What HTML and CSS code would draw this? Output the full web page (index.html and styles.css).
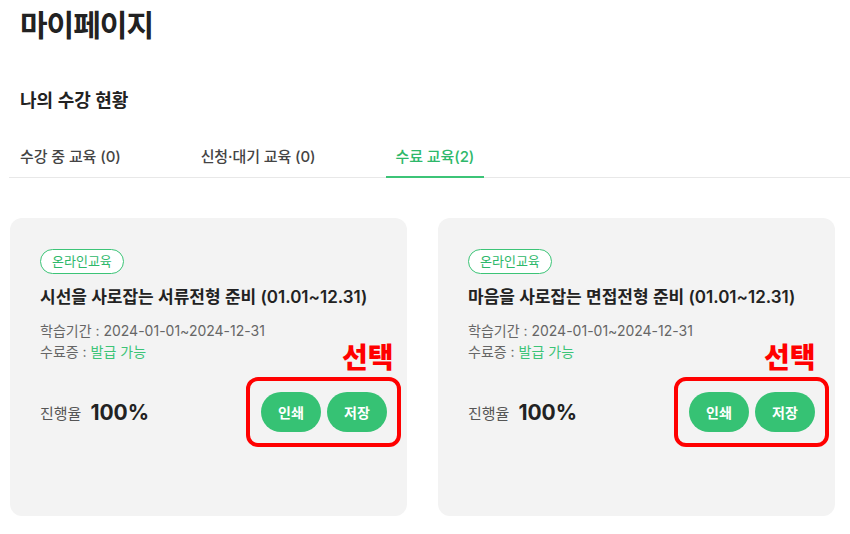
FILE: index.html
```html
<!DOCTYPE html>
<html lang="ko">
<head>
<meta charset="utf-8">
<title>마이페이지</title>
<link rel="stylesheet" href="styles.css">
</head>
<body>
<div class="page">
  <h1 class="page-title">마이페이지</h1>
  <h2 class="section-title">나의 수강 현황</h2>
  <div class="tabs">
    <div class="tab">수강 중 교육 (0)</div>
    <div class="tab">신청·대기 교육 (0)</div>
    <div class="tab active">수료 교육(2)</div>
  </div>
  <div class="cards">
    <div class="card">
      <span class="badge">온라인교육</span>
      <div class="card-title">시선을 사로잡는 서류전형 준비 (01.01~12.31)</div>
      <div class="info">
        <div>학습기간 : 2024-01-01~2024-12-31</div>
        <div>수료증 : <span class="ok">발급 가능</span></div>
      </div>
      <div class="bottom">
        <div class="progress"><span class="p-label">진행율</span><span class="p-value">100%</span></div>
        <div class="buttons"><button class="btn">인쇄</button><button class="btn">저장</button></div>
      </div>
      <div class="note-text">선택</div>
      <div class="note-box"></div>
    </div>
    <div class="card">
      <span class="badge">온라인교육</span>
      <div class="card-title">마음을 사로잡는 면접전형 준비 (01.01~12.31)</div>
      <div class="info">
        <div>학습기간 : 2024-01-01~2024-12-31</div>
        <div>수료증 : <span class="ok">발급 가능</span></div>
      </div>
      <div class="bottom">
        <div class="progress"><span class="p-label">진행율</span><span class="p-value">100%</span></div>
        <div class="buttons"><button class="btn">인쇄</button><button class="btn">저장</button></div>
      </div>
      <div class="note-text note-text-alt">선택</div>
      <div class="note-box"></div>
    </div>
  </div>
</div>
</body>
</html>
```
FILE: styles.css
```css
* { box-sizing: border-box; }
html, body { margin: 0; padding: 0; background: #fff; }
body {
  font-family: Inter, "Noto Sans CJK KR", sans-serif;
  color: #222;
}
.page { padding: 5px 15px 0 9px; }
.page-title {
  margin: 0 0 0 11px;
  font-size: 30px;
  line-height: 40px;
  font-weight: 700;
  color: #222;
  letter-spacing: -1px;
}
.section-title {
  margin: 44px 0 0 11px;
  font-size: 18px;
  line-height: 24px;
  font-weight: 600;
  color: #222;
}
.tabs {
  display: flex;
  gap: 60px;
  margin-top: 22px;
  padding-left: 1px;
  border-bottom: 1px solid #e8e8e8;
  margin-right: -15px;
}
.tab {
  padding: 11px 10px 9px;
  font-size: 15px;
  line-height: 21px;
  font-weight: 500;
  letter-spacing: -0.1px;
  color: #444;
  border-bottom: 2px solid transparent;
  margin-bottom: -1px;
}
.tab.active {
  color: #2eb86a;
  border-bottom-color: #3cc477;
}
.cards {
  display: grid;
  grid-template-columns: 397px 397px;
  gap: 31px;
  margin-top: 40px;
  padding-left: 1px;
}
.card {
  position: relative;
  height: 298px;
  background: #f3f3f3;
  border-radius: 12px;
  padding: 31px 20px 0 30px;
}
.badge {
  display: inline-block;
  height: 25px;
  line-height: 23px;
  padding: 0 11px;
  border: 1px solid #3cc477;
  border-radius: 13px;
  background: #fff;
  color: #2eb86a;
  font-size: 13px;
}
.card-title {
  margin-top: 11px;
  font-size: 17px;
  line-height: 24px;
  font-weight: 600;
  color: #222;
}
.info {
  margin-top: 11px;
  font-size: 14px;
  line-height: 21px;
  color: #666;
}
.ok { color: #3cc477; }
.bottom {
  margin-top: 30px;
  display: flex;
  justify-content: space-between;
  align-items: center;
}
.progress { display: flex; align-items: center; gap: 9px; }
.p-label { font-size: 15px; color: #555; }
.p-value { font-size: 21px; font-weight: 700; color: #222; }
.buttons { display: flex; gap: 6px; }
.btn {
  width: 60px;
  height: 40px;
  border: none;
  border-radius: 20px;
  background: #36c274;
  color: #fff;
  font-family: inherit;
  font-size: 14px;
  font-weight: 700;
  padding: 0;
}
.note-text {
  position: absolute;
  left: 332px;
  top: 120px;
  font-size: 28px;
  line-height: 36px;
  font-weight: 900;
  color: #ff0000;
  font-family: "Noto Sans CJK KR", sans-serif;
}
.note-text-alt { left: 326px; }
.note-box {
  position: absolute;
  left: 236px;
  top: 159px;
  width: 155px;
  height: 70px;
  border: 4px solid #ff0000;
  border-radius: 12px;
}
```
